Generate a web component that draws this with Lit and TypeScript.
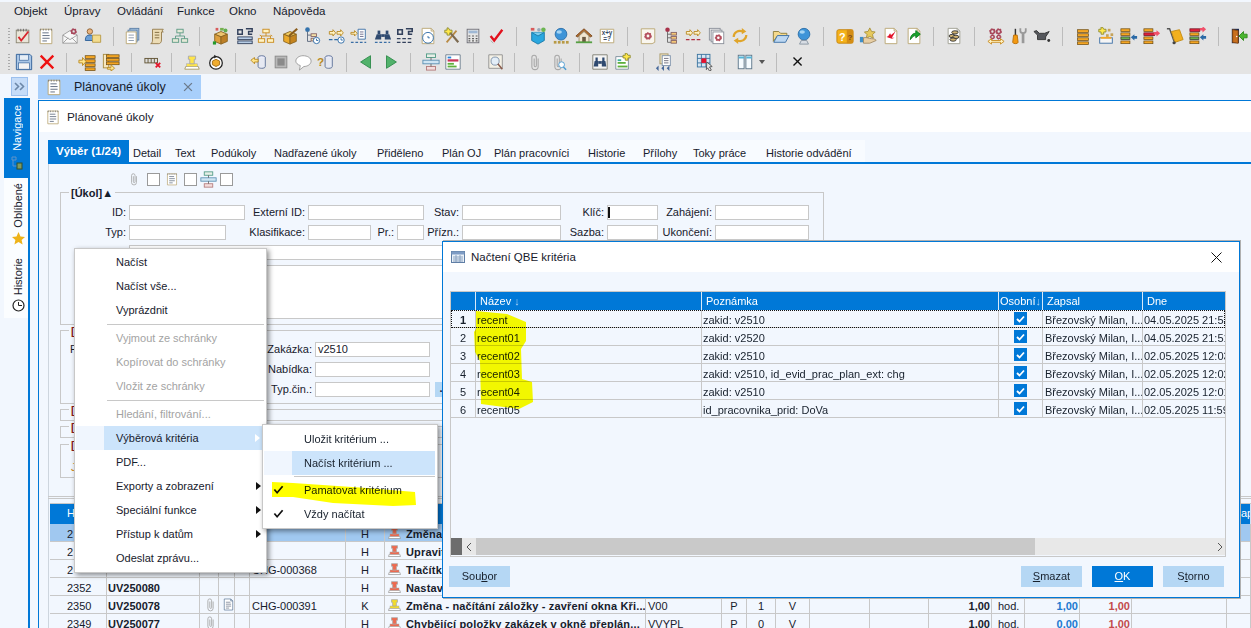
import { LitElement, html, css, svg } from "lit";
import { customElement } from "lit/decorators.js";

const line = (d: string, c: string, w = 1) => svg`<path d=${d} fill="none" stroke=${c} stroke-width=${w}/>`;
const fill = (d: string, c: string, s = "none") => svg`<path d=${d} fill=${c} stroke=${s}/>`;
const gear = (x: number, y: number, r: number, c: string) => svg`<circle cx=${x} cy=${y} r=${r} fill="none" stroke=${c} stroke-width=${r * 0.8}/><circle cx=${x} cy=${y} r=${r * 1.35} fill="none" stroke=${c} stroke-width=${r * 0.55} stroke-dasharray="1.6 1.4"/>`;
const clock = (x: number, y: number, r = 3.5) => svg`<circle cx=${x} cy=${y} r=${r} fill="#fff" stroke="#2b6aa6"/>${line(`M${x} ${y - 2}v2h2`, "#2b6aa6")}`;
const page = (b = "#b9a572", inner: unknown = "") => svg`<path d="M3.5 1.5h10l3 3v14h-13z" fill="#fff" stroke=${b}/>${line("M13.5 1.5v3h3", b)}${inner}`;
const txt = line("M6 6.5h7M6 9.5h8M6 12.5h8M6 15.5h5", "#58657a");
const bars = (x: number, y: number, w: number, n: number, step = 4.5) => svg`${Array.from({ length: n }, (_, i) => svg`<rect x=${x} y=${y + i * step} width=${w} height="3" fill="#f5a623" stroke="#6d4c13" stroke-width=".8"/>`)}`;
const colorBar = (x: number, y: number, w: number, c: string, s: string) => svg`<rect x=${x} y=${y} width=${w} height="3" fill=${c} stroke=${s} stroke-width=".8"/>`;
const box3 = (top: string, side: string, front: string) => svg`${fill("M3 8l7-3 7 3-7 3z", top, "#8a6420")}${fill("M3 8l7 3v8l-7-3z", front, "#8a6420")}${fill("M17 8l-7 3v8l7-3z", side, "#8a6420")}`;
const tree = (c: string, s: string) => svg`<rect x="6.5" y="2.5" width="7" height="4" fill=${c} stroke=${s}/><rect x="1.5" y="13" width="7" height="4" fill=${c} stroke=${s}/><rect x="11.5" y="13" width="7" height="4" fill=${c} stroke=${s}/>${line("M10 6.5V10M5 13v-3h10v3", s)}`;
const arrowsDash = (c: string, d: string) => svg`${fill("M1.5 5h4V3l3 3.5-3 3.5V8h-4z", "#fff3c4", c)}${fill("M10 5h4V3l3 3.5-3 3.5V8h-4z", "#fff3c4", c)}${line("M1 14h4M7 14h4M13 14h4", d, 1.4)}`;
const stamp = (c: string, base = "#9a9a9a") => svg`${fill("M3 15h14l1 3H2z", "#fff", base)}<rect x="4" y="12" width="12" height="3" fill=${c} stroke="#a8a8a8" stroke-width=".6"/>${fill("M7.5 12V7H6V3.5h8V7h-1.5v5z", c, "#a8a8a8")}`;
const clip = (c = "#a8a8a8") => line("M13.5 6v9a3.5 3.5 0 0 1-7 0V5a2.5 2.5 0 0 1 5 0v9a1 1 0 0 1-2.4 0V6", c, 1.2);
const dbl = (c: string) => svg`<ellipse cx="13" cy="5" rx="4" ry="2" fill="#eef" stroke=${c}/>${fill("M9 5v10c0 2.7 8 2.7 8 0V5", "#e6e9f2", c)}`;
const arrowRow = (y: number, dir: number, c: string) => dir > 0 ? fill(`M12 ${y + .5}h3v-2l4 3.5-4 3.5v-2h-3z`, c) : fill(`M19 ${y + .5}h-3v-2l-4 3.5 4 3.5v-2h3z`, c);

const IC: Record<string, unknown> = {
  check: svg`<rect x="2.5" y="3.5" width="14" height="14" fill="#e9e5d8" stroke="#8b8672"/>${line("M4.5 2v3M7.5 2v3M10.5 2v3M13.5 2v3", "#666")}${line("M5 11l3 4 8-10", "#d8262c", 2)}`,
  note: svg`${fill("M3.5 2.5h13v16h-13z", "#fff", "#b9a572")}${line("M4 2v2M7 2v2M10 2v2M13 2v2M16 2v2", "#777")}${txt}`,
  mail: svg`${fill("M2 9l8-5 8 5v9H2z", "#f7f7f7", "#9b9b9b")}${line("M2 9l8 5 8-5M2 18l6-6M18 18l-6-6", "#9b9b9b")}${gear(14, 5, 2.2, "#a8465a")}`,
  user: svg`<circle cx="6.5" cy="5" r="3" fill="#e9b57f" stroke="#8d5f30"/>${fill("M1.5 15c0-5 2-6 5-6s5 1 5 6z", "#6b9fd6", "#2c5f96")}${fill("M9.5 9h9v8h-9z", "#f3dc8e", "#b89a45")}`,
  copy: svg`<rect x="6.5" y="1.5" width="10" height="13" fill="#a9c6e2" stroke="#5b7ea6"/><rect x="4.5" y="3.5" width="10" height="13" fill="#cfe0f0" stroke="#5b7ea6"/>${fill("M2.5 5.5h11v13h-11z", "#fff", "#b9a572")}${line("M5 9h6M5 12h6M5 15h6", "#8896a8")}`,
  scroll: svg`${fill("M5 2.5h12c-1.5 1-1.5 3 0 3h-2v9c0 3-2 4-3 4H3c1.5-.5 2-2 2-4z", "#ecdcb5", "#93794a")}${line("M7.5 6h5M7.5 9h5M7.5 12h5", "#7b653a")}`,
  tree: tree("#e5e9d8", "#5c9a84"),
  box: svg`${box3("#eec56f", "#bd7f27", "#dd9f3e")}<rect x="4" y="1" width="3" height="3" fill="#d85b5b"/><rect x="9" y="1" width="4" height="3" fill="#76b04e"/><circle cx="15" cy="4" r="2.2" fill="#62ae50"/><rect x="1" y="16" width="3.5" height="3.5" fill="#239a2c"/>`,
  tasks: svg`${line("M2 3v5h5V3zM11 2h7v3h-4v3h4", "#33415c", 1.6)}<rect x="2" y="11" width="16" height="3" fill="#b7cde6" stroke="#33415c"/><rect x="2" y="15.5" width="16" height="3" fill="#b7cde6" stroke="#33415c"/>`,
  arrowsTree: svg`${tree("#fff3c4", "#c98b1e")}${line("M3 9l2 1M15 9l2 1", "#c98b1e")}`,
  pencilBox: svg`${box3("#f2cd60", "#c5841f", "#eba92a")}${line("M9 10L18 2", "#8a5b1a", 2.4)}`,
  dots: svg`<circle cx="5" cy="3" r="2.6" fill="#3473ad"/>${line("M5 5v11h4M5 9h4", "#58657a")}<rect x="9" y="7.5" width="6" height="3" fill="#f5e2a8" stroke="#866"/><rect x="9" y="12.5" width="3" height="3" fill="#f5e2a8" stroke="#866"/>${clock(15, 15)}`,
  arrowClock: svg`${arrowsDash("#b98a24", "#2b6aa6")}${clock(14.5, 14.5)}`,
  arrowPage: svg`${fill("M1 6h4V4l3 3-3 3V8H1z", "#fff3c4", "#b98a24")}${fill("M9 2.5h8v11H9z", "#fff", "#3a6ea5")}${line("M11 5.5h4M11 8h4M11 10.5h4", "#668")}${line("M1 17h3M6 17h3M11 17h3M16 17h2", "#3a6ea5", 1.3)}`,
  bino: svg`${fill("M3 8h5v6H1z", "#2f4a70")}${fill("M12 8h5l2 6h-7z", "#2f4a70")}<rect x="8" y="8" width="4" height="3" fill="#2f4a70"/><rect x="4" y="4" width="3" height="4" fill="#2f4a70"/><rect x="13" y="4" width="3" height="4" fill="#2f4a70"/>${line("M1 17h3M6 17h3M11 17h3M16 17h2", "#3a6ea5", 1.3)}`,
  hashDash: svg`${line("M2 3v5h5V3zM11 2h7v3h-4v3h4", "#33415c", 1.8)}${line("M1 13h4M7 13h4M13 13h4", "#33415c", 1.4)}${line("M1 17h4M7 17h4M13 17h4", "#33415c", 1.4)}`,
  pageClock: svg`${page()}${clock(10, 12, 6)}`,
  tools: svg`${line("M4 17L15 4", "#b88a44", 2)}${line("M6 4l11 13", "#7c6a50", 2.4)}${fill("M6 1l1.5 2.5H10v3H7.5V9h-3V6.5H2v-3h2.5V1z", "#ffe84a", "#8d8a30")}`,
  calc: svg`<rect x="3.5" y="2.5" width="13" height="15" fill="#e6e6e6" stroke="#6f6f78"/><rect x="5" y="4" width="10" height="3" fill="#9fb8d5"/>${line("M5 10h2M9 10h2M13 10h2M5 13h2M9 13h2M13 13h2M5 15.5h2M9 15.5h2M13 15.5h2", "#555", 1.3)}`,
  redCheck: svg`${line("M4 10l4 5L17 3", "#e2101c", 2.6)}${line("M4 15l3 3", "#aaa", 1)}`,
  cube: svg`${fill("M3 6h14v9l-7 4-7-4z", "#2aa7df", "#1678a8")}${fill("M3 6l7 4 7-4", "#7ccdee", "#1678a8")}<rect x="2" y="1" width="4" height="3" fill="#d85b5b"/><circle cx="11" cy="3" r="2" fill="#9ab"/><circle cx="16" cy="3" r="2.5" fill="#6cb552"/>`,
  globeBricks: svg`<circle cx="10" cy="8" r="6.5" fill="#3e94d8" stroke="#2e6fa8"/><ellipse cx="8" cy="5.5" rx="3" ry="2" fill="#a5d4f3"/><rect x="2" y="15.5" width="3" height="3" fill="#b89a45"/><rect x="6.5" y="15.5" width="3" height="3" fill="#b89a45"/><rect x="11" y="15.5" width="3" height="3" fill="#b89a45"/><rect x="15.5" y="15.5" width="3" height="3" fill="#b89a45"/>`,
  house: svg`${fill("M1 10l9-8 9 8-2 1-7-6-7 6z", "#b06f33", "#7c4a1f")}${fill("M4.5 10L10 5l5.5 5v7h-11z", "#f1e6d0", "#9a8a6a")}<rect x="8" y="11" width="4" height="6" fill="#6b5a42"/><rect x="1" y="16" width="18" height="2" fill="#56a044"/>`,
  xy: svg`${fill("M2.5 2.5h15v15l-3 0h-12z", "#fff", "#b9a572")}<text x="10" y="9" font-size="7" font-family="Liberation Sans" font-weight="700" text-anchor="middle" fill="#3a4a66">x+y</text><text x="10" y="16" font-size="7" font-family="Liberation Sans" font-weight="700" text-anchor="middle" fill="#3a4a66">=?</text>`,
  pageGear: svg`${fill("M2.5 2h15v15l-3 1.5h-12z", "#f9f6ee", "#b9a572")}${gear(10, 10, 2.6, "#b4505f")}`,
  redDots: svg`<circle cx="5" cy="3" r="2.5" fill="#a8324a"/>${line("M5 5v12h4M5 8h4M5 12h4", "#666")}<rect x="9" y="6" width="6" height="3" fill="#f5c876" stroke="#866"/><rect x="9" y="10.5" width="6" height="3" fill="#f5c876" stroke="#866"/><rect x="9" y="15" width="6" height="3" fill="#f5c876" stroke="#866"/>`,
  arrowsRed: arrowsDash("#b98a24", "#b03040"),
  pagesGear: svg`<rect x="1.5" y="1.5" width="12" height="13" fill="#eee" stroke="#8a8f99"/><rect x="3.5" y="3.5" width="12" height="13" fill="#f5f5f5" stroke="#8a8f99"/><rect x="5.5" y="5.5" width="12" height="13" fill="#fff" stroke="#8a8f99"/>${gear(11.5, 12, 2.4, "#b4505f")}`,
  refresh: svg`${line("M3 11c0-5 5-8 10-6", "#e0a52a", 2.4)}${fill("M12 1l5 4-5 3z", "#e0a52a")}${line("M17 9c0 5-5 8-10 6", "#e0a52a", 2.4)}${fill("M8 19l-5-4 5-3z", "#e0a52a")}`,
  folder: svg`${fill("M1.5 5h6l2 2h7v3H6L1.5 16z", "#f5d98c", "#8a7a3a")}${fill("M6 9.5h13L15 17H2z", "#bcd7f2", "#3a6ea5")}`,
  globe: svg`<circle cx="10" cy="8" r="6.5" fill="#3e94d8" stroke="#2e6fa8"/><ellipse cx="8" cy="5.5" rx="3" ry="2" fill="#a5d4f3"/>${fill("M7 15h6l2 4H5z", "#d8dde4", "#8894a2")}`,
  qblock: svg`<rect x="1" y="3" width="18" height="15" rx="2" fill="#f4b21a" stroke="#c4830e"/><rect x="12" y="3" width="7" height="15" fill="#d48d14"/><text x="7" y="15" font-size="12" font-family="Liberation Sans" font-weight="700" text-anchor="middle" fill="#fff">?</text><text x="15.5" y="14" font-size="9" font-family="Liberation Sans" font-weight="700" text-anchor="middle" fill="#7c4a1f">?</text>`,
  handStar: svg`${fill("M12 1l2 4 4 .5-3 3 1 4-4-2-4 2 1-4-3-3 4-.5z", "#e6c95d", "#a8923d")}${fill("M1 11h4v6H1z", "#3f8fc8")}${fill("M5 12c4-1 6 1 9 1s5 1 5 2l-7 3H5z", "#e8cfa5", "#a08a64")}`,
  pageRed: svg`${page()}${fill("M15 5l-4 7h3l-3 1-6-2 2-1 2-3 1 2z", "#e3152b")}`,
  pageGreen: svg`${page()}${fill("M6 14c0-5 3-7 6-7V4l5 4-5 4V9.5c-3 0-4 2-6 4.5z", "#19a32b", "#0f7a1f")}`,
  coins: svg`${page("#9d9d90")}<ellipse cx="11" cy="6" rx="3.5" ry="1.8" fill="#cdb070" stroke="#333"/><ellipse cx="8" cy="10" rx="3.5" ry="1.8" fill="#cdb070" stroke="#333"/><ellipse cx="12" cy="11" rx="3.5" ry="1.8" fill="#cdb070" stroke="#333"/><ellipse cx="9" cy="14" rx="3.5" ry="1.8" fill="#cdb070" stroke="#333"/>`,
  gearArrows: svg`${gear(6, 5, 2.2, "#a8465a")}${gear(13, 5, 2.2, "#a8465a")}${gear(6, 11, 1.8, "#a8465a")}${gear(13, 11, 1.8, "#a8465a")}${fill("M1 16l4-3v2h10v-2l4 3-4 3v-2H5v2z", "#fff3c4", "#c98b1e")}`,
  wrench: svg`${line("M6 2v7", "#333", 1.6)}${fill("M4 9h4l1 8c0 2-6 2-6 0z", "#f39a12", "#b86d0a")}${line("M14.5 7v11", "#999", 3)}${line("M11.5 1.5v3c0 3 6 3 6 0v-3", "#999", 2)}`,
  oil: svg`${fill("M1 5l3-1 3 3h6l5-2-4 6v3H5V9z", "#55575c", "#333")}<circle cx="17.5" cy="15" r="1.6" fill="#333"/>`,
  bars: bars(4, 3, 12, 4),
  plusBars: svg`${fill("M6 0l1.5 2.5H10v3H7.5V8h-3V5.5H2v-3h2.5V0z", "#ffe84a", "#8d8a30")}<rect x="12" y="2" width="3" height="3" fill="#c5a35a"/><rect x="15" y="7" width="3" height="3" fill="#c5a35a"/><rect x="10" y="8" width="3" height="3" fill="#c5a35a"/><rect x="3" y="12" width="14" height="6" fill="#f5f5f5" stroke="#3a6ea5"/><rect x="4" y="11" width="12" height="2" fill="#f5a623"/>`,
  barsIn: svg`${bars(1, 2, 10, 2)}${colorBar(1, 11, 10, "#69b04c", "#333")}${bars(1, 15.5, 10, 1)}${arrowRow(9.5, -1, "#2b6aa6")}`,
  barsOut: svg`${bars(1, 2, 10, 1)}${colorBar(1, 6.5, 12, "#e0203a", "#6d1020")}${bars(1, 11, 10, 2)}${arrowRow(5, 1, "#f0506a")}`,
  cart: svg`${line("M1 2h3l5 14", "#555", 1.6)}${fill("M6 5l9-2 4 11-9 3z", "#f2b01e", "#c48a10")}<circle cx="9" cy="17.5" r="1.8" fill="#444"/>`,
  barsBoth: svg`${colorBar(1, 2, 11, "#e0203a", "#6d1020")}${bars(1, 6.5, 10, 1)}${colorBar(1, 11, 10, "#69b04c", "#333")}${bars(1, 15.5, 10, 1)}${arrowRow(0.5, 1, "#f0506a")}${arrowRow(9.5, -1, "#2b6aa6")}`,
  door: svg`${fill("M2 2h8v16H2z", "#1c2a50")}${fill("M3 3l6 1v14l-6-1z", "#c9701e", "#8a4a10")}<circle cx="7.5" cy="10.5" r=".8" fill="#fff"/>${fill("M19 8h-4V5l-5 5 5 5v-3h4z", "#49b52e", "#2f8a1c")}`,
  save: svg`${fill("M1.5 1.5h15l2 2v15h-17z", "#a9c6e6", "#2e5d96")}<rect x="5" y="2" width="10" height="6" fill="#e7eef6" stroke="#2e5d96" stroke-width=".7"/><rect x="4" y="11" width="12" height="7" fill="#f4f4f4" stroke="#2e5d96" stroke-width=".7"/>`,
  redX: line("M3 3l14 14M17 3L3 17", "#ee1111", 2.6),
  gridIn: svg`${bars(8, 3, 11, 4)}${fill("M1 8h4V5l4 4.5L5 14v-3H1z", "#ffe58a", "#b98a24")}`,
  gridOut: svg`<rect x="1.5" y="1.5" width="6" height="15" fill="#f7e7bf" stroke="#a88b3f"/>${bars(5, 2, 14, 3, 4)}${fill("M6 16h4v-3l4 4-4 3v-2H6z", "#ffe58a", "#b98a24")}`,
  barX: svg`<rect x="1" y="6" width="14" height="5" fill="#ddd" stroke="#5f5130"/>${line("M4.5 6v5M8 6v5M11.5 6v5", "#5f5130")}${line("M13 11l5 5M18 11l-5 5", "#e3152b", 2)}`,
  stampY: stamp("#ffe54a", "#a89a60"),
  cubeCirc: svg`<circle cx="10" cy="11" r="7" fill="#fff" stroke="#222" stroke-width="1.4"/>${fill("M10 7l4 2v4l-4 2-4-2V9z", "#f0ad30", "#a16d15")}${fill("M8 2l3 2-3 2z", "#222")}`,
  dbIn: svg`${dbl("#5b6f96")}${fill("M1 8l4-3v2h4v3H5v2z", "#ffe58a", "#b98a24")}`,
  stop: svg`<rect x="3.5" y="3.5" width="13" height="13" fill="#b8b8b8" stroke="#888"/><rect x="6" y="6" width="8" height="8" fill="#8a8a8a"/>`,
  bubble: svg`${fill("M10 3c5 0 9 2.5 9 6s-4 6-8 6l-5 4 1-5c-3-1-5-3-5-5 0-3.500 4-6 8-6z", "#fff", "#9a9a9a")}`,
  qDb: svg`${dbl("#5b6f96")}<text x="4" y="14" font-size="13" font-family="Liberation Sans" font-weight="700" text-anchor="middle" fill="#b98a24">?</text>`,
  left: fill("M15 3v14L4 10z", "#52b26b", "#2e8a49"),
  right: fill("M5 3v14l11-7z", "#52b26b", "#2e8a49"),
  flow: svg`<rect x="5" y="1" width="10" height="4" fill="#e7efe7" stroke="#4e9a84"/><rect x="1" y="8" width="18" height="4" fill="#cfe5f3" stroke="#5a8fb2"/><rect x="5" y="15" width="10" height="4" fill="#f3dcdc" stroke="#b27a7a"/>${line("M10 5v3M10 12v3", "#666")}`,
  gantt: svg`${fill("M2 2h16v16H2z", "#fff", "#6b7d8c")}<rect x="4" y="4" width="4" height="2" fill="#2c84d8"/><rect x="4" y="7" width="12" height="2.500" fill="#c8345a"/><rect x="4" y="11" width="7" height="2" fill="#5fb03e"/><rect x="4" y="14" width="10" height="2" fill="#5fb03e"/>`,
  search: svg`${fill("M2 2h15v15H2z", "#f4f1e6", "#8f8f8f")}<circle cx="9" cy="9" r="4.500" fill="#e3eef8" stroke="#7a8fa8"/>${line("M12 12l5 6", "#8a5a4a", 1.6)}`,
  clipIc: clip(),
  clipSearch: svg`${clip()}<circle cx="14" cy="13" r="3.200" fill="#fff" stroke="#4a9ad0"/>${line("M16 15.500l3 3", "#4a9ad0", 1.6)}`,
  binoPage: svg`${fill("M2 2h16v16H2z", "#f4f4f4", "#7d7d70")}${fill("M4 9h4v6H3z", "#2f4a70")}${fill("M12 9h4l1 6h-5z", "#2f4a70")}<rect x="8" y="9" width="4" height="3" fill="#2f4a70"/><rect x="5" y="5" width="2.500" height="4" fill="#2f4a70"/><rect x="12.500" y="5" width="2.500" height="4" fill="#2f4a70"/>`,
  plusGantt: svg`${fill("M2 4h14v14H2z", "#fff", "#7b8c9c")}<rect x="4" y="7" width="4" height="2" fill="#3ab0a0"/><rect x="4" y="10" width="9" height="2" fill="#5fb03e"/><rect x="4" y="14" width="11" height="2" fill="#5fb03e"/>${fill("M14 0l1.500 2.500H18v3h-2.500V8h-3V5.500H10v-3h2.500V0z", "#ffe84a", "#8d8a30")}`,
  pagesArrows: svg`<rect x="5.500" y="1" width="9" height="11" fill="#eadfc0" stroke="#a89868"/><rect x="8" y="3" width="9" height="11" fill="#fff" stroke="#7a8fa8"/>${line("M10 6h5M10 8.500h5M10 11h5", "#667")}${fill("M1 17l3-3v6zM7 17l3-3v6zM13 17l3-3v6z", "#46689a")}`,
  gridCursor: svg`<rect x="1.500" y="1.500" width="14" height="14" fill="#d8e6f3" stroke="#39739f"/>${line("M6 1.500v14M11 1.500v14M1.500 6h14M1.500 11h14", "#39739f")}<rect x="6" y="6" width="5.500" height="5" fill="#e8102c"/>${fill("M12 10l6 5-3 .5 2 3.500-2 1-2-3.500-1.500 2z", "#e8e8e8", "#555")}`,
  cols: svg`<rect x="2.500" y="2.500" width="6.500" height="15" fill="#f5fbff" stroke="#5a7488"/><rect x="11" y="2.500" width="6.500" height="15" fill="#f5fbff" stroke="#5a7488"/>${line("M3 5h6M11.500 5h6", "#55b5d8", 2)}`,
  closeX: line("M5 5l9 9M14 5l-9 9", "#111", 1.5),
};

const TB1: [number, string][] = [[23,"check"],[46,"note"],[70,"mail"],[93,"user"],[113,"|"],[133,"copy"],[157,"scroll"],[180,"tree"],[199,"|"],[221,"box"],[245,"tasks"],[266,"arrowsTree"],[290,"pencilBox"],[312,"dots"],[337,"arrowClock"],[359,"arrowPage"],[383,"bino"],[405,"hashDash"],[428,"pageClock"],[452,"tools"],[473,"calc"],[496,"redCheck"],[516,"|"],[538,"cube"],[561,"globeBricks"],[584,"house"],[607,"xy"],[627,"|"],[648,"pageGear"],[672,"redDots"],[694,"arrowsRed"],[717,"pagesGear"],[740,"refresh"],[759,"|"],[781,"folder"],[804,"globe"],[823,"|"],[845,"qblock"],[868,"handStar"],[891,"pageRed"],[914,"pageGreen"],[933,"|"],[954,"coins"],[974,"|"],[996,"gearArrows"],[1019,"wrench"],[1042,"oil"],[1062,"|"],[1083,"bars"],[1106,"plusBars"],[1129,"barsIn"],[1152,"barsOut"],[1175,"cart"],[1198,"barsBoth"],[1218,"|"],[1239,"door"]];
const TB2: [number, string][] = [[24,"save"],[47,"redX"],[66,"|"],[87,"gridIn"],[111,"gridOut"],[131,"|"],[153,"barX"],[171,"|"],[192,"stampY"],[216,"cubeCirc"],[235,"|"],[259,"dbIn"],[281,"stop"],[303,"bubble"],[326,"qDb"],[346,"|"],[366,"left"],[391,"right"],[410,"|"],[431,"flow"],[453,"gantt"],[473,"|"],[496,"search"],[514,"|"],[535,"clipIc"],[558,"clipSearch"],[579,"|"],[600,"binoPage"],[623,"plusGantt"],[643,"|"],[664,"pagesArrows"],[683,"|"],[705,"gridCursor"],[724,"|"],[745,"cols"],[762,"caret"],[777,"|"],[799,"closeX"]];

const MENUS: [string, number][] = [["Objekt", 50], ["Úpravy", 53], ["Ovládání", 60], ["Funkce", 52], ["Okno", 44], ["Nápověda", 70]];
const TABS: [string, number][] = [["Detail", 42], ["Text", 36], ["Podúkoly", 63], ["Nadřazené úkoly", 103], ["Přiděleno", 65], ["Plán OJ", 52], ["Plán pracovníci", 94], ["Historie", 55], ["Přílohy", 50], ["Toky práce", 73], ["Historie odvádění", 103]];

const QBE = [
  ["recent", "zakid: v2510", "04.05.2025 21:53"],
  ["recent01", "zakid: v2520", "04.05.2025 21:51"],
  ["recent02", "zakid: v2510", "02.05.2025 12:03"],
  ["recent03", "zakid: v2510, id_evid_prac_plan_ext: chg", "02.05.2025 12:02"],
  ["recent04", "zakid: v2510", "02.05.2025 12:01"],
  ["recent05", "id_pracovnika_prid: DoVa", "02.05.2025 11:59"],
];

const ROWS: any[] = [
  { id: "2", uv: "", chg: "", t: "H", c: "#ee6a50", title: "Změna", code: "", sel: true },
  { id: "2", uv: "", chg: "", t: "H", c: "#ee6a50", title: "Upravit", code: "" },
  { id: "2", uv: "", chg: "CHG-000368", t: "H", c: "#ee6a50", title: "Tlačítko", code: "" },
  { id: "2352", uv: "UV250080", chg: "", t: "H", c: "#ee6a50", title: "Nastavení", code: "" },
  { id: "2350", uv: "UV250078", chg: "CHG-000391", t: "K", c: "#f2dc2c", title: "Změna - načítání záložky - zavření okna Kři...", code: "V00", n: "1", nums: ["1,00", "1,00", "1,00"], docs: true },
  { id: "2349", uv: "UV250077", chg: "", t: "H", c: "#ee6a50", title: "Chybějící položky zakázek v okně přeplán...", code: "VVYPL", n: "0", nums: ["1,00", "0,00", "1,00"], clipOnly: true },
];

@customElement("app-root")
export class AppRoot extends LitElement {
  static styles = css`
    :host { display: block; width: 1251px; height: 628px; overflow: hidden; position: relative; background: #f2f7fe; font: 11px "Liberation Sans", Arial, sans-serif; color: #17202c; }
    * { box-sizing: border-box; }
    svg { display: block; flex: none; }
    .top { margin-top: 2px; height: 72px; background: #e4e4e4; }
    .menubar { display: flex; height: 20px; padding: 2px 0 0 14px; font-size: 11.5px; line-height: 14px; }
    .tb { display: flex; align-items: center; height: 24px; position: relative; }
    .tb1 { margin-top: 2px; }
    .tb2 { margin-top: 2px; }
    .grip { width: 2px; height: 16px; margin-left: 8px; flex: none; background: repeating-linear-gradient(#aaa 0 1px, transparent 1px 3px); }
    .sep { width: 1px; height: 19px; background: #bcbcbc; flex: none; }
    .caret { width: 0; height: 0; border: 3.5px solid transparent; border-top: 4px solid #555; border-bottom: 0; flex: none; }
    .lower { display: flex; height: 554px; }
    .side { width: 38px; flex: none; display: flex; flex-direction: column; }
    .exp { width: 17px; height: 19px; margin: 3px 0 0 11px; background: #c5dcf8; border: 1px solid #9cc0ee; display: flex; align-items: center; justify-content: center; }
    .vt { writing-mode: vertical-rl; transform: rotate(180deg); font-size: 11px; line-height: 12px; white-space: nowrap; }
    .nav { margin: 2px 0 0 4px; width: 26px; height: 80px; background: #0078d7; color: #fff; display: flex; flex-direction: column; align-items: center; padding-top: 7px; gap: 5px; }
    .rest { margin-left: 4px; width: 26px; flex: 1; border-right: 2px solid #0078d7; display: flex; flex-direction: column; align-items: center; padding: 5px 0 0 4px; background: linear-gradient(#fbfdff 0 140px, #f2f7fe 140px); }
    .rest .vt.c { margin-top: 13px; }
    .mt4 { margin-top: 4px; }
    .main { flex: 1; min-width: 0; display: flex; flex-direction: column; }
    .mtabs { height: 26px; padding-top: 1px; }
    .mtab { width: 163px; height: 24px; background: #a8cffb; display: flex; align-items: center; padding-left: 7px; font-size: 12.5px; }
    .mtab span { margin-left: 11px; width: 109px; white-space: nowrap; }
    .panel { flex: 1; border-top: 1px solid #0078d7; border-left: 1px solid #0078d7; display: flex; flex-direction: column; min-height: 0; }
    .title { height: 31px; background: #fff; display: flex; align-items: center; padding-left: 6px; gap: 6px; font-size: 11.8px; flex: none; }
    .tabstrip { margin: 8px 0 0 9px; display: flex; height: 24px; border-bottom: 2px solid #0078d7; flex: none; }
    .tab { height: 22px; line-height: 26px; background: #f8fbff; white-space: nowrap; padding-left: 4px; }
    .tab.on { width: 81px; background: #0078d7; color: #fff; font-weight: 700; font-size: 11.5px; line-height: 22px; padding-left: 8px; }
    .body { margin-left: 9px; border-left: 1px solid #cdd5de; flex: 1; min-height: 0; }
    .icons { display: flex; align-items: center; height: 14px; margin: 8px 0 0 78px; }
    .sq { width: 13px; height: 13px; background: #fff; border: 1px solid #9a9a9a; }
    .s1 { margin-left: 6px; }
    .s2 { margin-left: 5px; }
    .s3 { margin-left: 3px; }
    .pg { margin-left: 5px; }
    .fl { margin-left: 3px; }
    .group { margin-left: 11px; width: 764px; border: 1px solid #c8c8c8; }
    .g1 { margin-top: 6px; height: 133px; }
    .g2 { margin-top: 5px; height: 74px; }
    .g3 { margin-top: 5px; height: 12px; }
    .g4 { margin-top: 5px; height: 12px; }
    .g5 { margin-top: 6px; height: 34px; }
    .legend { display: block; width: fit-content; margin: -6px 0 0 8px; padding: 0 2px; background: #f2f7fe; font-weight: 700; line-height: 13px; }
    .legend.r { color: #8a1c1c; }
    .fg { display: grid; grid-template-columns: 68px 116px 63px 116px 38px 99px 46px 51px 57px 94px; grid-auto-rows: 15px; row-gap: 5px; margin-top: 5px; }
    .lb { text-align: right; padding-right: 3px; line-height: 15px; white-space: nowrap; }
    .in { background: #fff; border: 1px solid #c8c8c8; height: 15px; line-height: 13px; padding-left: 2px; }
    .cell2 { display: flex; }
    .caretIn { border-left: 2px solid #111; height: 11px; margin: 1px 0 0 -2px; }
    .w97 { width: 97px; }
    .w63 { width: 63px; }
    .w27 { width: 27px; }
    .w26 { width: 26px; }
    .long { grid-column: 2 / 11; }
    .ta { margin: 5px 14px 0 68px; height: 54px; background: #fff; border: 1px solid #c8c8c8; }
    .g2rows { display: flex; flex-direction: column; gap: 5px; margin-top: 4px; }
    .g2row { display: flex; height: 15px; }
    .g2row .fx { width: 200px; padding-left: 9px; line-height: 15px; }
    .g2row .lb { width: 54px; }
    .g2row .in { width: 115px; }
    .dots { width: 15px; height: 15px; margin-left: 5px; background: #b5d7f4; text-align: center; line-height: 12px; font-weight: 700; }
    .j { color: #d08a1a; margin: 9px 0 0 10px; }
    .rule { margin: 18px 0 0 -1px; height: 3px; border-top: 1px solid #c8c8c8; border-bottom: 1px solid #c8c8c8; }
    .tbl { margin: 4px 0 0 1px; border-top: 1px solid #c8c8c8; width: 1202px; }
    .tr { display: grid; grid-template-columns: 57px 93px 19px 16px 15px 96px 39px 261px 76px 25px 29px 34px 60px 59px 63px 33px 55px 52px 95px 24px; height: 18px; line-height: 21px; }
    .tr.h { height: 20px; background: #0078d7; color: #fff; line-height: 19px; }
    .tr.s { background: #a0c8f0; }
    .tr > div { border-right: 1px solid #c8c8c8; border-bottom: 1px solid #c8c8c8; white-space: nowrap; overflow: hidden; padding-left: 2px; }
    .tr.h > div { border-bottom: 0; border-right: 1px solid #cfe3f6; }
    .tr svg { margin: 1px 0 0 1px; }
    .idc { padding-left: 17px !important; }
    .uvc { padding-left: 1px !important; }
    .b { font-weight: 700; }
    .ttl { display: flex; gap: 4px; letter-spacing: .15px; padding-left: 1px !important; }
    .c { text-align: center; padding-left: 0 !important; }
    .rnum { text-align: right; padding: 0 1px 0 0 !important; font-weight: 700; }
    .blue { color: #2079d0; }
    .red { color: #c34a4a; }
    .hod { padding-left: 6px !important; }
    .kap { padding-left: 14px !important; }
    .menu { position: absolute; background: #fff; border: 1px solid #c8c8c8; box-shadow: 2px 2px 5px rgba(0,0,0,.45); padding: 1px; z-index: 3; }
    .m1 { left: 74px; top: 248px; width: 193px; height: 325px; }
    .m2 { left: 262px; top: 424px; width: 176px; height: 105px; padding-top: 2px; z-index: 4; }
    .it { display: flex; align-items: center; height: 24px; padding-left: 40px; position: relative; white-space: nowrap; }
    .it.dis { color: #a3a3a3; }
    .it.hl { background: linear-gradient(90deg, #f0f6fe 0 28px, #cce4fb 28px); margin-right: 2px; }
    .m2 .it.hl { margin-right: 1px; }
    .sp { height: 1px; background: #c8c8c8; margin: 2px 1px 1px 31px; }
    .m2 .sp { margin: 1px 1px 1px 30px; }
    .arr { position: absolute; right: 4px; top: 8px; width: 0; height: 0; border: 4px solid transparent; border-left: 5px solid #111; border-right: 0; }
    .it.hl .arr { border-left-color: #fff; right: 3px; }
    .ck { position: absolute; left: 9px; top: 6px; }
    .ykm { position: absolute; left: -1px; top: -1px; pointer-events: none; mix-blend-mode: multiply; }
    .dlg { position: absolute; left: 442px; top: 241px; width: 798px; height: 357px; background: #f2f7fe; border: 1px solid #0078d7; box-shadow: 1px -1px 0 #b0b0b0, 1px 1px 0 #b0b0b0; z-index: 2; display: flex; flex-direction: column; }
    .dt { height: 30px; background: #fff; display: flex; align-items: center; padding: 0 17px 0 8px; gap: 6px; font-size: 11.5px; flex: none; }
    .dt span { flex: 1; }
    .grid { margin: 19px 0 0 7px; width: 776px; height: 266px; border: 1px solid #c8c8c8; display: flex; flex-direction: column; flex: none; }
    .qr { display: grid; grid-template-columns: 25px 226px 297px 44px 100px 82px; height: 18px; line-height: 20px; flex: none; }
    .qr > div { border-right: 1px solid #c8c8c8; border-bottom: 1px solid #c8c8c8; white-space: nowrap; overflow: hidden; padding-left: 1px; }
    .qr.h { background: #0078d7; color: #fff; line-height: 19px; }
    .qr.h > div { border-bottom: 0; border-right: 1px solid #d7e9f9; padding-left: 4px; }
    .qr.h > div:last-child, .qr > div:last-child { border-right: 0; }
    .qr.f { outline: 1px dotted #111; outline-offset: -1px; }
    .qr.h .os { padding-left: 1px; }
    .sort { color: #a9d2f5; }
    .num { text-align: center; padding-left: 0 !important; }
    .zp { padding-left: 2px !important; }
    .ckb { width: 13px; height: 13px; background: #0078d7; margin: 2px auto 0; display: flex; align-items: center; justify-content: center; }
    .ckc { padding-left: 0 !important; }
    .fillq { flex: 1; }
    .sb { display: flex; height: 17px; margin-bottom: 1px; flex: none; }
    .sb .d { width: 11px; background: #6d6d6d; }
    .sb .a { width: 14px; background: #e8e8e8; display: flex; align-items: center; justify-content: center; }
    .sb .t { width: 559px; background: #c9c9c9; }
    .sb .r { flex: 1; background: #e8e8e8; display: flex; align-items: center; justify-content: flex-end; padding-right: 2px; }
    .foot { display: flex; gap: 10px; margin: 9px 15px 0 6px; }
    .foot .grow { flex: 1; }
    .btn { width: 61px; height: 21px; background: #b5d7f4; text-align: center; line-height: 21px; }
    .btn.ok { background: #0078d7; color: #fff; }
    u { text-underline-offset: 1px; }
  `;

  private icon(n: string, size = 20, cls = "") {
    return html`<svg class=${cls} width=${size} height=${size} viewBox="0 0 20 20">${IC[n]}</svg>`;
  }

  private bar(list: [number, string][], cls: string) {
    let x = 10;
    return html`<div class="tb ${cls}"><div class="grip"></div>${list.map(([c, n]) => {
      const w = n === "|" ? 1 : n === "caret" ? 7 : 18;
      const ml = Math.round(c - w / 2 - x);
      x += ml + w;
      const st = `margin-left:${ml}px`;
      if (n === "|") return html`<div class="sep" style=${st}></div>`;
      if (n === "caret") return html`<div class="caret" style=${st}></div>`;
      return html`<svg style=${st} width="18" height="18" viewBox="0 0 20 20">${IC[n]}</svg>`;
    })}</div>`;
  }

  private mi(t: unknown, o: { dis?: boolean; hl?: boolean; arr?: boolean; ck?: boolean } = {}) {
    return html`<div class="it ${o.dis ? "dis" : ""} ${o.hl ? "hl" : ""}">${o.ck ? html`<svg class="ck" width="11" height="11" viewBox="0 0 12 12"><path d="M1.500 6l3 3.500 6-7" fill="none" stroke="#111" stroke-width="1.900"/></svg>` : ""}${t}${o.arr ? html`<i class="arr"></i>` : ""}</div>`;
  }

  render() {
    const x = html`<svg width="10" height="10" viewBox="0 0 9 9"><path d="M1 1l7 7M8 1L1 8" fill="none" stroke="#6b7a8c" stroke-width="1.200"/></svg>`;
    return html`
      <div class="top">
        <div class="menubar">${MENUS.map(([m, w]) => html`<div style="width:${w}px">${m}</div>`)}</div>
        ${this.bar(TB1, "tb1")}
        ${this.bar(TB2, "tb2")}
      </div>
      <div class="lower">
        <div class="side">
          <div class="exp"><svg width="11" height="9" viewBox="0 0 11 9"><path d="M1 1l3.500 3.500L1 8M6 1l3.500 3.500L6 8" fill="none" stroke="#6d88a8" stroke-width="1.600"/></svg></div>
          <div class="nav"><div class="vt">Navigace</div><svg width="14" height="14" viewBox="0 0 14 14"><path d="M2 1h4v3H2zM3 4v6h4" fill="none" stroke="#5f93c8"/><rect x="7" y="7" width="5" height="6" fill="#7d9a62" stroke="#2f4f2f"/></svg></div>
          <div class="rest">
            <div class="vt">Oblíbené</div>
            <svg class="mt4" width="13" height="13" viewBox="0 0 13 13"><path d="M6.500 0l2 4.500 4.500.4-3.400 3 1 4.600-4.100-2.400-4.100 2.400 1-4.600L0 4.900l4.500-.4z" fill="#eeb31a"/></svg>
            <div class="vt c">Historie</div>
            <svg class="mt4" width="13" height="13" viewBox="0 0 13 13"><circle cx="6.500" cy="6.500" r="5.500" fill="#fff" stroke="#222" stroke-width="1.200"/><path d="M6.500 3v3.500H10" fill="none" stroke="#222"/></svg>
          </div>
        </div>
        <div class="main">
          <div class="mtabs"><div class="mtab">${this.icon("note", 18)}<span>Plánované úkoly</span>${x}</div></div>
          <div class="panel">
            <div class="title">${this.icon("note", 16)}<div>Plánované úkoly</div></div>
            <div class="tabstrip">
              <div class="tab on">Výběr (1/24)</div>
              ${TABS.map(([t, w]) => html`<div class="tab" style="width:${w}px">${t}</div>`)}
            </div>
            <div class="body">
              <div class="icons">
                ${this.icon("clipIc", 14)}<div class="sq s1"></div>
                ${this.icon("note", 14, "pg")}<div class="sq s2"></div>
                ${this.icon("flow", 17, "fl")}<div class="sq s3"></div>
              </div>
              <div class="group g1">
                <div class="legend">[Úkol]▲</div>
                <div class="fg">
                  <div class="lb">ID:</div><div class="in"></div>
                  <div class="lb">Externí ID:</div><div class="in"></div>
                  <div class="lb">Stav:</div><div class="in"></div>
                  <div class="lb">Klíč:</div><div class="in"><div class="caretIn"></div></div>
                  <div class="lb">Zahájení:</div><div class="in"></div>
                  <div class="lb">Typ:</div><div class="in w97"></div>
                  <div class="lb">Klasifikace:</div>
                  <div class="cell2"><div class="in w63"></div><div class="lb w26">Pr.:</div><div class="in w27"></div></div>
                  <div class="lb">Přízn.:</div><div class="in"></div>
                  <div class="lb">Sazba:</div><div class="in"></div>
                  <div class="lb">Ukončení:</div><div class="in"></div>
                  <div class="lb"></div><div class="in long"></div>
                </div>
                <div class="ta"></div>
              </div>
              <div class="group g2">
                <div class="legend r">[</div>
                <div class="g2rows">
                  <div class="g2row"><div class="fx">F</div><div class="lb">Zakázka:</div><div class="in">v2510</div></div>
                  <div class="g2row"><div class="fx"></div><div class="lb">Nabídka:</div><div class="in"></div></div>
                  <div class="g2row"><div class="fx"></div><div class="lb">Typ.čin.:</div><div class="in"></div><div class="dots">..</div></div>
                </div>
              </div>
              <div class="group g3"><div class="legend r">[</div></div>
              <div class="group g4"><div class="legend r">[</div></div>
              <div class="group g5"><div class="legend r">[</div><div class="j">J</div></div>
              <div class="rule"></div>
              <div class="tbl">
                <div class="tr h">
                  <div class="idc">H</div><div></div><div></div><div></div><div></div><div></div><div></div><div></div><div></div><div></div><div></div><div></div><div></div><div></div><div></div><div></div><div></div><div></div><div></div><div class="kap">ap</div>
                </div>
                ${ROWS.map((r) => html`
                  <div class="tr ${r.sel ? "s" : ""}">
                    <div class="idc">${r.id}</div><div class="b uvc">${r.uv}</div>
                    <div>${r.docs || r.clipOnly ? html`<svg width="15" height="15" viewBox="0 0 20 20">${IC.clipIc}</svg>` : ""}</div>
                    <div>${r.docs ? html`<svg width="13" height="15" viewBox="0 0 20 20">${page("#4d6a8c", txt)}</svg>` : ""}</div>
                    <div></div><div>${r.chg}</div><div class="c">${r.t}</div>
                    <div class="b ttl"><svg width="15" height="15" viewBox="0 0 20 20">${stamp(r.c)}</svg><span>${r.title}</span></div>
                    <div>${r.code}</div><div class="c">${r.nums ? "P" : ""}</div><div class="c">${r.n ?? ""}</div><div class="c">${r.nums ? "V" : ""}</div>
                    <div></div><div></div>
                    <div class="rnum">${r.nums?.[0] ?? ""}</div><div class="hod">${r.nums ? "hod." : ""}</div>
                    <div class="rnum blue">${r.nums?.[1] ?? ""}</div><div class="rnum red">${r.nums?.[2] ?? ""}</div>
                    <div></div><div></div>
                  </div>`)}
              </div>
            </div>
          </div>
        </div>
      </div>

      <div class="menu m1">
        ${this.mi("Načíst")}${this.mi("Načíst vše...")}${this.mi("Vyprázdnit")}
        <div class="sp"></div>
        ${this.mi("Vyjmout ze schránky", { dis: true })}${this.mi("Kopírovat do schránky", { dis: true })}${this.mi("Vložit ze schránky", { dis: true })}
        <div class="sp"></div>
        ${this.mi("Hledání, filtrování...", { dis: true })}${this.mi("Výběrová kritéria", { hl: true, arr: true })}${this.mi("PDF...")}
        ${this.mi("Exporty a zobrazení", { arr: true })}${this.mi("Speciální funkce", { arr: true })}${this.mi("Přístup k datům", { arr: true })}${this.mi("Odeslat zprávu...")}
      </div>
      <div class="menu m2">
        ${this.mi("Uložit kritérium ...")}${this.mi("Načíst kritérium ...", { hl: true })}
        <div class="sp"></div>
        ${this.mi("Pamatovat kritérium", { ck: true })}${this.mi("Vždy načítat", { ck: true })}
        <svg class="ykm" width="176" height="105" viewBox="262 424 176 105"><path d="M272 482L293 483L367 488L415 492L416 505L393 506L333 503L293 497L272 497Z" fill="#ffff00"/></svg>
      </div>

      <div class="dlg">
        <div class="dt">
          <svg width="14" height="14" viewBox="0 0 14 14"><rect x=".5" y="1.500" width="13" height="11" fill="#eaf1f8" stroke="#5f7ea5"/><rect x=".5" y="1.500" width="13" height="3" fill="#7e9cc4"/><path d="M2 7h10M2 9h10M2 11h10M5 5v7M9 5v7" stroke="#8aa2c0" fill="none"/></svg>
          <span>Načtení QBE kritéria</span>
          <svg width="11" height="11" viewBox="0 0 11 11"><path d="M.5.5l10 10M10.500.5l-10 10" stroke="#111" fill="none"/></svg>
        </div>
        <div class="grid">
          <div class="qr h"><div></div><div>Název <span class="sort">↓</span></div><div>Poznámka</div><div class="os">Osobní<span class="sort">↓</span></div><div>Zapsal</div><div>Dne</div></div>
          ${QBE.map((q, i) => html`<div class="qr ${i === 0 ? "f" : ""}">
            <div class="num ${i === 0 ? "b" : ""}">${i + 1}</div><div>${q[0]}</div><div>${q[1]}</div>
            <div class="ckc"><div class="ckb"><svg width="9" height="8" viewBox="0 0 9 8"><path d="M1 4l2.500 2.500L8 1.500" stroke="#fff" stroke-width="1.800" fill="none"/></svg></div></div>
            <div class="zp">Březovský Milan, I...</div><div>${q[2]}</div></div>`)}
          <div class="fillq"></div>
          <div class="sb"><div class="d"></div><div class="a"><svg width="6" height="10" viewBox="0 0 6 10"><path d="M5 1L1 5l4 4" fill="none" stroke="#555"/></svg></div><div class="t"></div><div class="r"><svg width="6" height="10" viewBox="0 0 6 10"><path d="M1 1l4 4-4 4" fill="none" stroke="#555"/></svg></div></div>
        </div>
        <div class="foot">
          <div class="btn">Sou<u>b</u>or</div><div class="grow"></div>
          <div class="btn"><u>S</u>mazat</div><div class="btn ok"><u>O</u>K</div><div class="btn">S<u>t</u>orno</div>
        </div>
        <svg class="ykm" width="798" height="357" viewBox="443 242 798 357"><path d="M477 312L508 315L527 323L527 342L522 350L523 380L533 383L534 403L520 410L482 405L481 362L476 353L475 333L477 330Z" fill="#ffff00"/></svg>
      </div>
    `;
  }
}
